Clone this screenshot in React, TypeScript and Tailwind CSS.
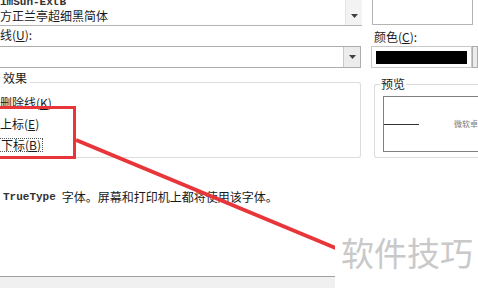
import React from "react";

const cjk = { fontFamily: '"Noto Sans CJK SC", "Noto Sans", sans-serif' };
const mono = { fontFamily: '"Liberation Mono", "Noto Sans CJK SC", monospace' };

function Arrow() {
  return (
    <svg width="7" height="4" viewBox="0 0 7 4">
      <path d="M0 0 L7 0 L3.5 4 Z" fill="#404040" />
    </svg>
  );
}

export default function App() {
  return (
    <div className="relative w-[478px] h-[288px] overflow-hidden bg-white text-[#1a1a1a]" style={cjk}>
      <div className="flex flex-col">
        {/* Row 1: font list */}
        <div className="flex h-[26px]">
          <div className="w-[362px] flex border-b border-[#b4b4b4]">
            <div className="flex-1 flex flex-col -mt-[3px] leading-[11px]">
              <span className="text-[11px] font-bold text-[#333] whitespace-nowrap" style={mono}>imSun-ExtB</span>
              <span className="text-[12px] leading-[13px] mt-[1px]">方正兰亭超细黑简体</span>
            </div>
            <div className="w-[17px] bg-[#f3f3f3] border-l border-[#e4e4e4] flex items-start justify-center pt-[14px]">
              <Arrow />
            </div>
          </div>
          <div className="ml-[10px] w-[101px] h-[25px] border border-t-0 border-[#b4b4b4]" />
        </div>
        {/* Row 2: labels */}
        <div className="flex h-[20px]">
          <div className="w-[362px] text-[12px] leading-[12px] pt-[3px]">线(<span className="underline">U</span>):</div>
          <div className="ml-[12px] text-[12px] leading-[12px] pt-[5px]">颜色(<span className="underline">C</span>):</div>
        </div>
        {/* Row 3: combos */}
        <div className="flex h-[22px]">
          <div className="w-[362px] flex border border-l-0 border-[#adadad]">
            <div className="flex-1" />
            <div className="w-[17px] bg-[#ececec] border-l border-[#c8c8c8] flex items-center justify-center">
              <Arrow />
            </div>
          </div>
          <div className="ml-[10px] flex items-center h-[22px]">
            <div className="w-[101px] h-[22px] border border-[#c8c8c8] flex items-center px-[4px]">
              <div className="w-[93px] h-[13px] bg-black" />
            </div>
            <div className="w-[6px] h-[22px] border border-[#adadad] bg-[#ececec]" />
          </div>
        </div>
        {/* Row 4: effects + preview */}
        <div className="flex mt-[4px] h-[86px]">
          <div className="w-[362px] relative">
            <div className="absolute left-0 right-0 top-[10px] bottom-0 border border-l-0 border-[#dcdcdc] rounded-r-[3px]" />
            <div className="relative flex flex-col text-[12px] leading-[12px]">
              <span className="bg-white w-fit pl-[3px] pr-[3px]">效果</span>
              <span className="mt-[13px]">删除线(<span className="underline">K</span>)</span>
              <span className="mt-[9px]">上标(<span className="underline">E</span>)</span>
              <span className="mt-[8px] w-fit border border-dotted border-[#555] px-[1px] -ml-[1px]">下标(<span className="underline">B</span>)</span>
            </div>
          </div>
          <div className="ml-[13px] flex-1 relative">
            <div className="absolute left-0 right-[-4px] top-[12px] bottom-0 border border-r-0 border-[#dcdcdc] rounded-l-[3px]" />
            <div className="relative flex flex-col">
              <span className="ml-[6px] bg-white w-fit px-[1px] text-[12px] leading-[14px] mt-[5px]">预览</span>
              <div className="ml-[9px] mt-[5px] h-[56px] border border-r-0 border-[#808080] flex items-center">
                <div className="w-[35px] h-[1px] bg-[#333]" />
                <span className="ml-[35px] text-[8px] text-[#777] whitespace-nowrap">微软卓</span>
              </div>
            </div>
          </div>
        </div>
        {/* Row 5: description */}
        <div className="mt-[33px] pl-[3px] text-[12px] leading-[12px] flex items-center">
          <span className="text-[11px] font-bold text-[#333]" style={mono}>TrueType</span>
          <span className="ml-[6px]">字体。屏幕和打印机上都将使用该字体。</span>
        </div>
        {/* Bottom bar */}
        <div className="mt-[73px] h-[20px] bg-[#f0f0f0] border-t border-[#a0a0a0]" />
      </div>

      {/* Red highlight */}
      <div className="absolute left-[-10px] top-[106px] w-[86px] h-[53px] border-[3px] border-[#e8353a]" />
      <svg className="absolute left-0 top-0" width="478" height="288">
        <line x1="76" y1="140" x2="338" y2="249" stroke="#e8353a" strokeWidth="4" />
      </svg>
      {/* Watermark */}
      <div className="absolute left-[335px] top-[228px] w-[143px] h-[60px] bg-white">
        <span className="absolute left-[6px] top-[1px] text-[33px] leading-[46px] text-[#c9c9c9] whitespace-nowrap">软件技巧</span>
      </div>
    </div>
  );
}
